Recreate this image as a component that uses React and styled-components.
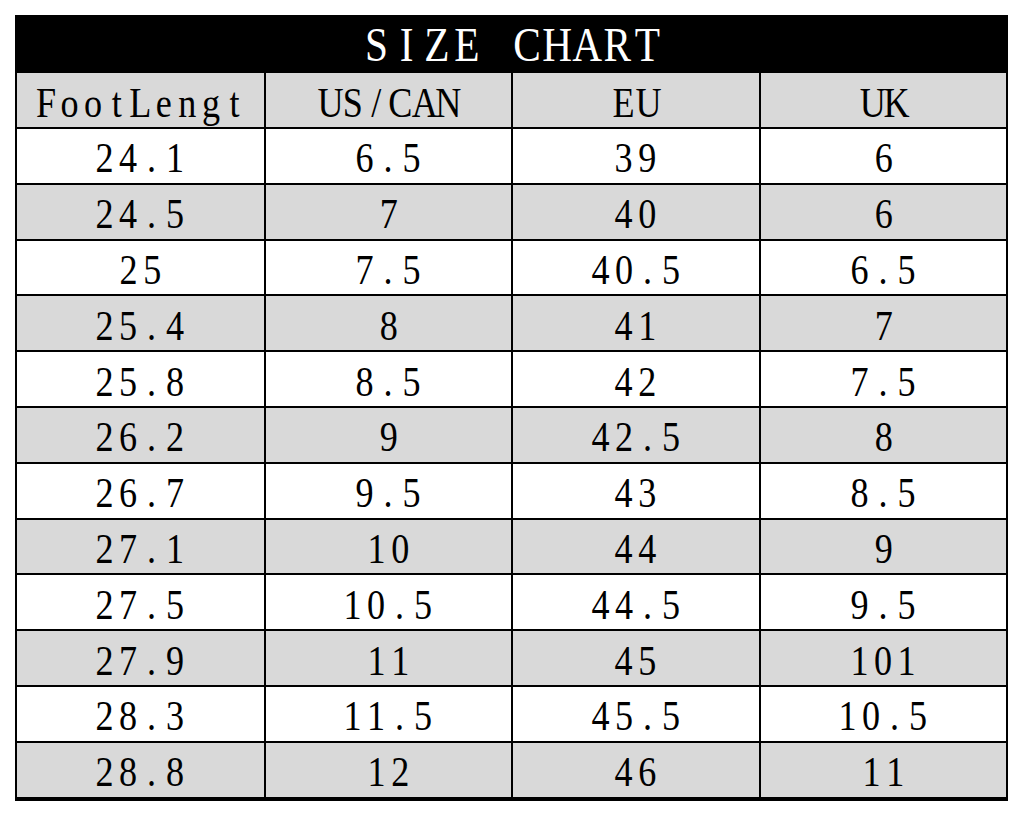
import styled, { createGlobalStyle } from "styled-components";

const GlobalStyle = createGlobalStyle`
  html, body {
    margin: 0;
    padding: 0;
    background: #ffffff;
  }
`;

const rows = [
  ["24.1", "6.5", "39", "6"],
  ["24.5", "7", "40", "6"],
  ["25", "7.5", "40.5", "6.5"],
  ["25.4", "8", "41", "7"],
  ["25.8", "8.5", "42", "7.5"],
  ["26.2", "9", "42.5", "8"],
  ["26.7", "9.5", "43", "8.5"],
  ["27.1", "10", "44", "9"],
  ["27.5", "10.5", "44.5", "9.5"],
  ["27.9", "11", "45", "101"],
  ["28.3", "11.5", "45.5", "10.5"],
  ["28.8", "12", "46", "11"],
];

const headings = ["FootLengt", "US/CAN", "EU", "UK"];

const MonoText = ({ text, pitch }) => (
  <Squeeze>
    {text.split("").map((ch, i) => (
      <Glyph key={i} $w={pitch}>
        {ch === " " ? "\u00a0" : ch}
      </Glyph>
    ))}
  </Squeeze>
);

const SizeChart = () => {
  return (
    <Page>
      <GlobalStyle />
      <Chart>
        <Title>
          <MonoText text="SIZE CHART" pitch={35} />
        </Title>
        {headings.map((h) => (
          <Cell key={h} $shade>
            <MonoText text={h} pitch={27.4} />
          </Cell>
        ))}
        {rows.map((row, r) =>
          row.map((value, c) => (
            <Cell key={`${r}-${c}`} $shade={r % 2 === 1}>
              <MonoText text={value} pitch={27.4} />
            </Cell>
          ))
        )}
      </Chart>
    </Page>
  );
};

const Page = styled.div`
  padding: 15px 16px 16px 15px;
`;

const Chart = styled.div`
  width: 993px;
  box-sizing: border-box;
  display: grid;
  grid-template-columns: repeat(4, 1fr);
  grid-template-rows: 56px 54px repeat(12, 53.8px);
  gap: 2px;
  padding: 0 2px 4px 2px;
  background: #000000;
  font-family: "Liberation Serif", "Times New Roman", serif;
  color: #000000;
`;

const Title = styled.div`
  grid-column: 1 / -1;
  margin: 0 -2px;
  display: flex;
  align-items: center;
  justify-content: center;
  padding-top: 4px;
  background: #000000;
  color: #ffffff;
  font-size: 48px;
  line-height: 1;
`;

const Cell = styled.div`
  display: flex;
  align-items: center;
  justify-content: center;
  padding-top: 5px;
  box-sizing: border-box;
  background: ${(p) => (p.$shade ? "#d9d9d9" : "#ffffff")};
  font-size: 42px;
  line-height: 1;
`;

const Squeeze = styled.span`
  display: inline-block;
  transform: scaleX(0.86);
  white-space: nowrap;
`;

const Glyph = styled.span`
  display: inline-block;
  width: ${(p) => p.$w}px;
  text-align: center;
`;

export default SizeChart;
